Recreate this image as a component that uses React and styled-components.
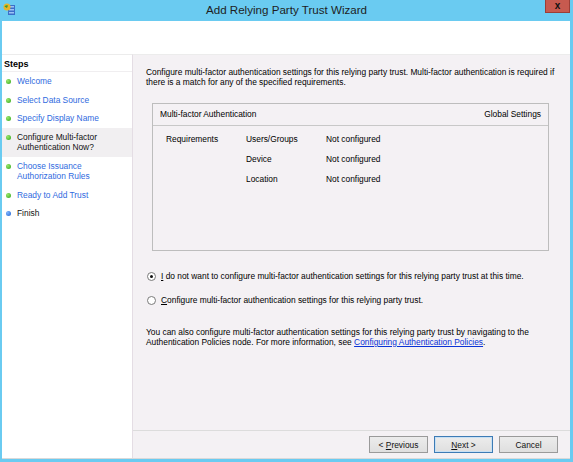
import styled, { createGlobalStyle } from "styled-components";

const GlobalStyle = createGlobalStyle`
  html, body {
    margin: 0;
    padding: 0;
    background: #6acbf1;
  }
  body {
    font-family: "Liberation Sans", Arial, sans-serif;
    font-size: 8.4px;
    color: #000;
  }
`;

const Window = styled.div`
  width: 573px;
  height: 462px;
  background: #6acbf1;
  display: flex;
  flex-direction: column;
  overflow: hidden;
`;

const TitleBar = styled.div`
  position: relative;
  height: 21px;
  display: flex;
  align-items: center;
  justify-content: center;
  flex-shrink: 0;
`;

const AppIcon = styled.svg`
  position: absolute;
  left: 3px;
  top: 3px;
`;

const Title = styled.div`
  font-size: 11.6px;
  color: #1e1e1e;
  margin-top: -3px;
`;

const CloseButton = styled.div`
  position: absolute;
  right: 3px;
  top: 0;
  width: 25px;
  height: 13px;
  background: #c75a4f;
  border: 1px solid #9c3e36;
  border-top: none;
  box-sizing: border-box;
  display: flex;
  align-items: center;
  justify-content: center;
  font-weight: bold;
  font-size: 10px;
  line-height: 1;
  color: #111;
`;

const Client = styled.div`
  flex: 1;
  margin: 0 3px 3px 2px;
  background: #fff;
  display: flex;
  flex-direction: column;
  min-height: 0;
`;

const Header = styled.div`
  height: 33px;
  flex-shrink: 0;
  background: #fff;
`;

const Body = styled.div`
  flex: 1;
  display: flex;
  min-height: 0;
  border-bottom: 1px solid #d9d9d9;
`;

const Sidebar = styled.div`
  width: 131px;
  flex-shrink: 0;
  background: #fff;
  border-right: 1px solid #e4dde4;
  border-top: 1px solid #ececec;
  padding-top: 4px;
  box-sizing: border-box;
`;

const StepsTitle = styled.div`
  font-weight: bold;
  font-size: 9px;
  padding: 0 0 2px 2px;
  border-bottom: 1px solid #f0eef0;
`;

const StepList = styled.ul`
  list-style: none;
  margin: 0;
  padding: 0;
`;

const Step = styled.li`
  display: flex;
  align-items: flex-start;
  padding: 4px 0 4px 4px;
  line-height: 10.5px;
  background: ${({ current }) => (current ? "#f1eff1" : "transparent")};
  color: ${({ link }) => (link ? "#2f6ae0" : "#111")};
`;

const Dot = styled.span`
  width: 5px;
  height: 5px;
  border-radius: 50%;
  margin: 3px 6px 0 0;
  flex-shrink: 0;
  background: ${({ done }) =>
    done
      ? "radial-gradient(circle at 35% 35%, #9be86a, #2fa51c)"
      : "radial-gradient(circle at 35% 35%, #7fb6ff, #1d5fd0)"};
`;

const Main = styled.div`
  flex: 1;
  background: #f4f1f4;
  display: flex;
  flex-direction: column;
  border-top: 1px solid #ececec;
`;

const Content = styled.div`
  flex: 1;
  padding: 13px 10px 0 13px;
  line-height: 9.5px;
`;

const Intro = styled.p`
  margin: 0;
`;

const SettingsBox = styled.div`
  margin: 16px 11px 0 6px;
  height: 148px;
  border: 1px solid #bdbdbd;
  box-sizing: border-box;
`;

const BoxHeader = styled.div`
  display: flex;
  justify-content: space-between;
  height: 20px;
  align-items: center;
  padding: 1px 7px 0 7px;
  border-bottom: 1px solid #c8c8c8;
`;

const ReqGrid = styled.div`
  display: grid;
  grid-template-columns: 80px 80px auto;
  grid-auto-rows: 20px;
  align-items: center;
  padding: 4px 0 0 13px;
`;

const RadioGroup = styled.div`
  display: flex;
  flex-direction: column;
  gap: 14px;
  margin-top: 21px;
  margin-left: 1px;
`;

const RadioRow = styled.label`
  display: flex;
  align-items: center;
  gap: 5px;
`;

const Radio = styled.span`
  width: 9px;
  height: 9px;
  border-radius: 50%;
  border: 1px solid #7a7a7a;
  background: #fff;
  box-sizing: border-box;
  display: flex;
  align-items: center;
  justify-content: center;
  &::after {
    content: "";
    width: 3px;
    height: 3px;
    border-radius: 50%;
    background: ${({ checked }) => (checked ? "#111" : "transparent")};
  }
`;

const Note = styled.p`
  margin: 22px 0 0 0;
  line-height: 10px;
`;

const Link = styled.a`
  color: #0b33d6;
  text-decoration: underline;
`;

const Footer = styled.div`
  height: 28px;
  border-top: 1px solid #dcdcdc;
  display: flex;
  justify-content: flex-end;
  align-items: flex-start;
  gap: 6px;
  padding: 5px 12px 0 0;
  box-sizing: border-box;
  flex-shrink: 0;
`;

const Button = styled.button`
  width: 59px;
  height: 17px;
  font-family: inherit;
  font-size: 8.4px;
  padding: 0;
  color: #111;
  background: linear-gradient(#ececec, #dfdfdf);
  border: 1px solid ${({ primary }) => (primary ? "#3d7bb5" : "#9a9a9a")};
  box-shadow: ${({ primary }) => (primary ? "inset 0 0 0 1px #c8e0f4" : "none")};
`;

const U = styled.span`
  text-decoration: underline;
`;

const steps = [
  { label: "Welcome", link: true, done: true },
  { label: "Select Data Source", link: true, done: true },
  { label: "Specify Display Name", link: true, done: true },
  { label: "Configure Multi-factor Authentication Now?", current: true, done: true },
  { label: "Choose Issuance Authorization Rules", link: true, done: true },
  { label: "Ready to Add Trust", link: true, done: true },
  { label: "Finish", done: false },
];

const requirements = [
  ["Requirements", "Users/Groups", "Not configured"],
  ["", "Device", "Not configured"],
  ["", "Location", "Not configured"],
];

export default function App() {
  return (
    <>
      <GlobalStyle />
      <Window>
        <TitleBar>
          <AppIcon width="13" height="13" viewBox="0 0 13 13">
            <rect x="5" y="2" width="7" height="10" fill="#3b6fc9" />
            <rect x="6" y="3" width="5" height="1.5" fill="#9cc4f5" />
            <rect x="6" y="6" width="5" height="1.5" fill="#9cc4f5" />
            <rect x="6" y="9" width="5" height="1.5" fill="#9cc4f5" />
            <circle cx="4" cy="4" r="3.5" fill="#e7b52a" />
            <path d="M1.5 3.5 Q3 1.5 5 2.5 L4 5 Z" fill="#3d9a2d" />
          </AppIcon>
          <Title>Add Relying Party Trust Wizard</Title>
          <CloseButton>x</CloseButton>
        </TitleBar>
        <Client>
          <Header />
          <Body>
            <Sidebar>
              <StepsTitle>Steps</StepsTitle>
              <StepList>
                {steps.map((s) => (
                  <Step key={s.label} link={s.link} current={s.current}>
                    <Dot done={s.done} />
                    <span>{s.label}</span>
                  </Step>
                ))}
              </StepList>
            </Sidebar>
            <Main>
              <Content>
                <Intro>
                  Configure multi-factor authentication settings for this relying party trust.
                  Multi-factor authentication is required if there is a match for any of the
                  specified requirements.
                </Intro>
                <SettingsBox>
                  <BoxHeader>
                    <span>Multi-factor Authentication</span>
                    <span>Global Settings</span>
                  </BoxHeader>
                  <ReqGrid>
                    {requirements.map((row, i) =>
                      row.map((cell, j) => <span key={`${i}-${j}`}>{cell}</span>)
                    )}
                  </ReqGrid>
                </SettingsBox>
                <RadioGroup>
                  <RadioRow>
                    <Radio checked />
                    <span>
                      <U>I</U> do not want to configure multi-factor authentication settings for
                      this relying party trust at this time.
                    </span>
                  </RadioRow>
                  <RadioRow>
                    <Radio />
                    <span>
                      <U>C</U>onfigure multi-factor authentication settings for this relying party
                      trust.
                    </span>
                  </RadioRow>
                </RadioGroup>
                <Note>
                  You can also configure multi-factor authentication settings for this relying
                  party trust by navigating to the Authentication Policies node. For more
                  information, see <Link>Configuring Authentication Policies</Link>.
                </Note>
              </Content>
              <Footer>
                <Button>
                  &lt; <U>P</U>revious
                </Button>
                <Button primary>
                  <U>N</U>ext &gt;
                </Button>
                <Button>Cancel</Button>
              </Footer>
            </Main>
          </Body>
        </Client>
      </Window>
    </>
  );
}
